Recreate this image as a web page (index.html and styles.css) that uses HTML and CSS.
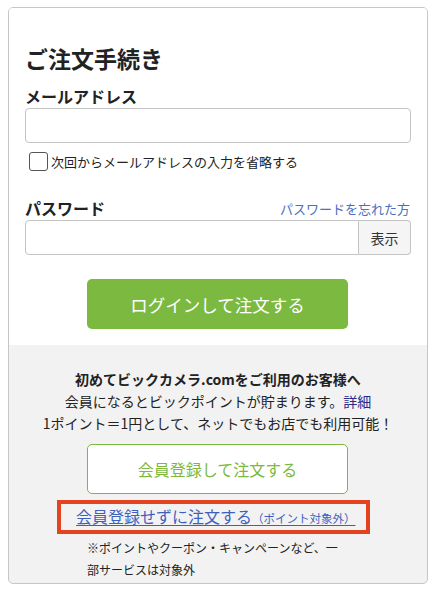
FILE: index.html
```html
<!DOCTYPE html>
<html lang="ja">
<head>
<meta charset="utf-8">
<title>ご注文手続き</title>
<link rel="stylesheet" href="styles.css">
</head>
<body>
<div class="card">
  <section class="login">
    <h1 class="title">ご注文手続き</h1>
    <div class="label">メールアドレス</div>
    <input class="field" type="text">
    <label class="remember"><span class="box"></span><span>次回からメールアドレスの入力を省略する</span></label>
    <div class="pw-head">
      <span class="label">パスワード</span>
      <a class="forgot" href="#">パスワードを忘れた方</a>
    </div>
    <div class="pw-row">
      <input class="field pw" type="password">
      <button class="show" type="button">表示</button>
    </div>
    <button class="login-btn" type="button">ログインして注文する</button>
  </section>
  <section class="guest">
    <p class="intro"><b>初めてビックカメラ.comをご利用のお客様へ</b><br>会員になるとビックポイントが貯まります。<a class="detail" href="#">詳細</a><br>1ポイント＝1円として、ネットでもお店でも利用可能！</p>
    <button class="reg-btn" type="button">会員登録して注文する</button>
    <div class="nologin"><a href="#">会員登録せずに注文する<small>（ポイント対象外）</small></a></div>
    <p class="note">※ポイントやクーポン・キャンペーンなど、一部サービスは対象外</p>
  </section>
</div>
</body>
</html>
```

FILE: styles.css
```css
* { box-sizing: border-box; }
body {
  margin: 0;
  background: #fff;
  font-family: "Noto Sans CJK JP", "Noto Sans", sans-serif;
  color: #222;
}
.card {
  width: 420px;
  margin: 7px 0 0 8px;
  border: 1px solid #c6c6c6;
  border-radius: 5px;
  overflow: hidden;
  background: #f2f2f2;
}
.login {
  background: #fff;
  padding: 34px 16px 16px;
  display: flex;
  flex-direction: column;
}
.title {
  margin: 0 0 10px;
  font-size: 23px;
  line-height: 32px;
  font-weight: bold;
}
.label {
  font-size: 16px;
  line-height: 24px;
  font-weight: bold;
}
.field {
  display: block;
  width: 100%;
  height: 35px;
  margin: 0;
  border: 1px solid #c4c4c4;
  border-radius: 4px;
  background: #fff;
  font: inherit;
}
.remember {
  display: flex;
  align-items: center;
  gap: 3px;
  margin: 9px 0 0 4px;
  height: 19px;
  font-size: 13px;
}
.box {
  width: 19px;
  height: 19px;
  border: 1px solid #555;
  border-radius: 3px;
  background: #fff;
}
.pw-head {
  margin-top: 25px;
  display: flex;
  justify-content: space-between;
  align-items: center;
}
.forgot {
  font-size: 13px;
  color: #4a6ec0;
  text-decoration: none;
  margin-right: 1px;
}
.pw-row {
  display: flex;
}
.pw {
  flex: 1;
  border-radius: 4px 0 0 4px;
}
.show {
  width: 52px;
  height: 35px;
  margin: 0;
  border: 1px solid #c4c4c4;
  border-left: none;
  border-radius: 0 4px 4px 0;
  background: #f5f5f5;
  font-family: inherit;
  font-size: 14px;
  color: #333;
  padding: 0;
}
.login-btn {
  align-self: center;
  margin-top: 24px;
  width: 261px;
  height: 50px;
  border: none;
  border-radius: 5px;
  background: #7cb940;
  color: #fff;
  font-family: inherit;
  font-size: 17.5px;
  margin-left: -1px;
}
.guest {
  padding: 23px 16px 2px;
  display: flex;
  flex-direction: column;
  align-items: center;
}
.intro {
  margin: 0;
  font-size: 14px;
  line-height: 22px;
  text-align: center;
  color: #222;
}
.intro b { font-weight: bold; }
.detail {
  color: #2a2a8c;
  text-decoration: none;
}
.reg-btn {
  margin: 10px 0 0 -1px;
  width: 261px;
  height: 50px;
  border: 1px solid #7cb940;
  border-radius: 5px;
  background: #fff;
  color: #7cb940;
  font-family: inherit;
  font-size: 16px;
}
.nologin {
  align-self: flex-start;
  margin: 6px 0 0 32px;
  width: 313px;
  height: 34px;
  border: 4px solid #e4431f;
  padding-left: 15px;
  display: flex;
  align-items: center;
}
.nologin a {
  color: #3f5fbf;
  font-size: 16px;
  line-height: 20px;
  text-decoration: underline;
  text-underline-offset: 2px;
}
.nologin small {
  font-size: 11.5px;
}
.note {
  margin: 3px 0 0 -1px;
  width: 261px;
  font-size: 12px;
  line-height: 22px;
  color: #222;
}
```
